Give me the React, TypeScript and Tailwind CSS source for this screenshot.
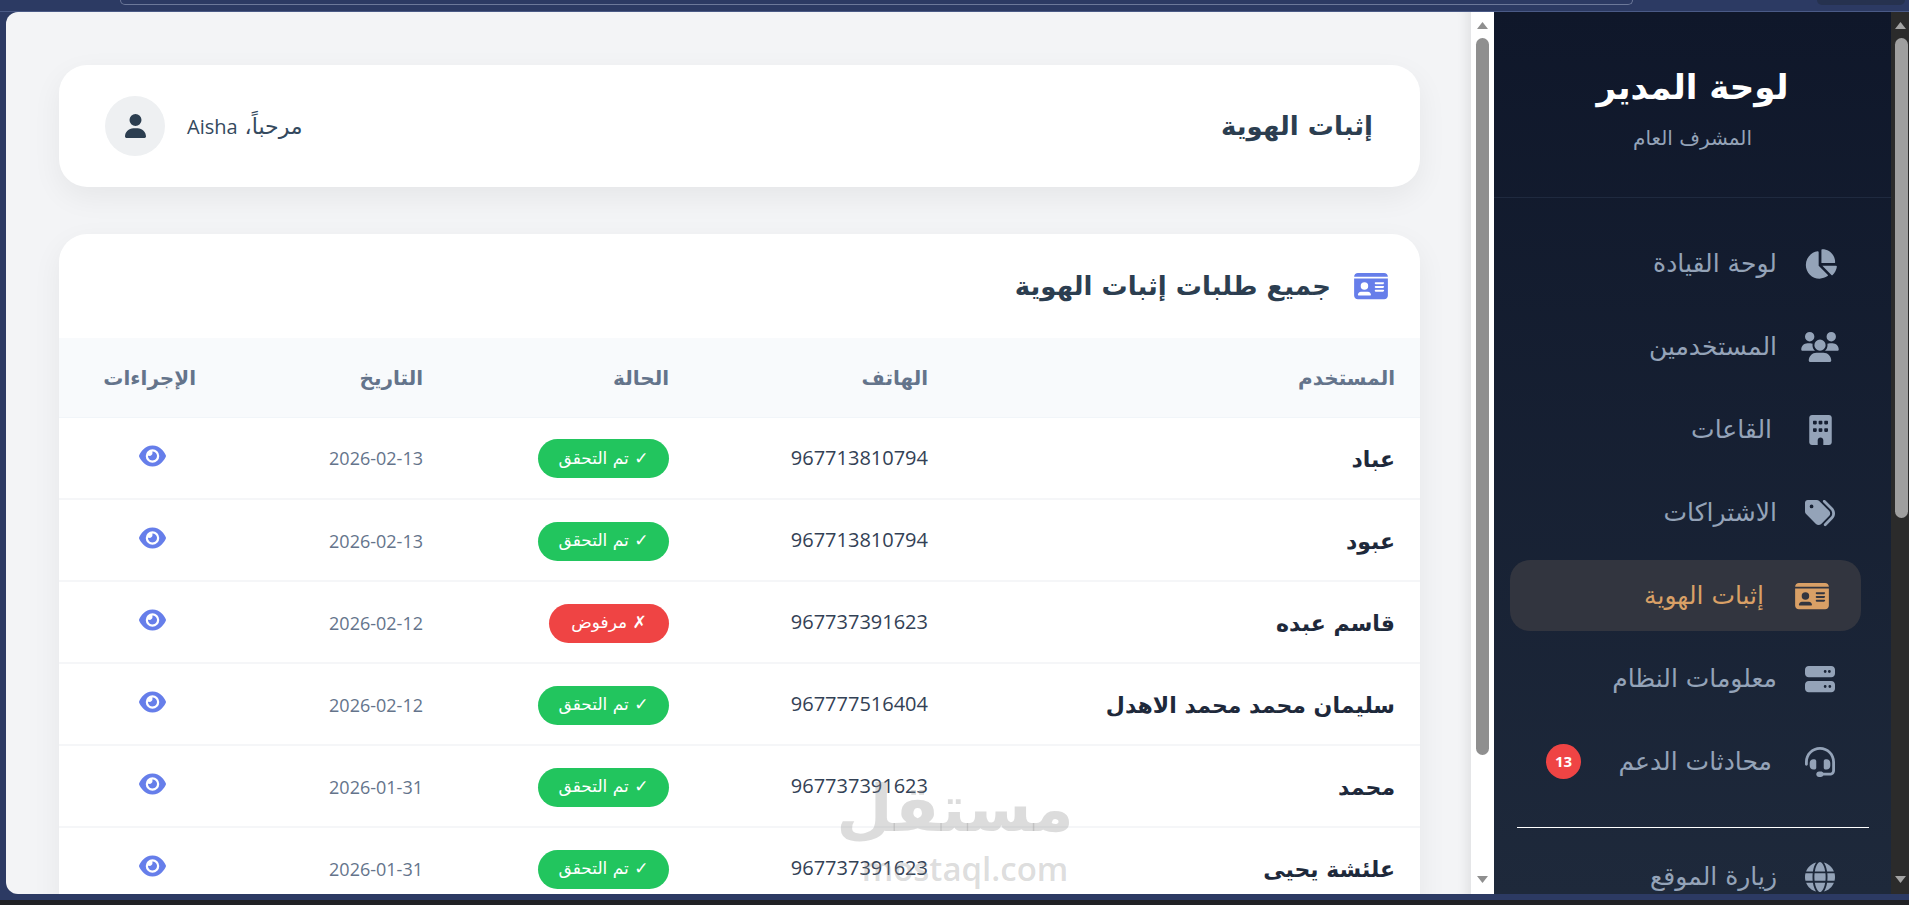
import React from 'react';
import { FaChartPie, FaUsers, FaBuilding, FaTags, FaIdCard, FaServer, FaHeadset, FaGlobe, FaUser, FaEye } from 'react-icons/fa6';

const rows = [
  { name: 'عباد', phone: '967713810794', status: 'ok', date: '2026-02-13' },
  { name: 'عبود', phone: '967713810794', status: 'ok', date: '2026-02-13' },
  { name: 'قاسم عبده', phone: '967737391623', status: 'no', date: '2026-02-12' },
  { name: 'سليمان محمد محمد الاهدل', phone: '967777516404', status: 'ok', date: '2026-02-12' },
  { name: 'محمد', phone: '967737391623', status: 'ok', date: '2026-01-31' },
  { name: 'علئشة يحيى', phone: '967737391623', status: 'ok', date: '2026-01-31' },
];

const navItems = [
  { label: 'لوحة القيادة', icon: FaChartPie, size: 'w-[33px] h-[30px]', gap: 'gap-[23px]' },
  { label: 'المستخدمين', icon: FaUsers, size: 'w-[38px] h-[30px]', gap: 'gap-[23px]' },
  { label: 'القاعات', icon: FaBuilding, size: 'w-[23px] h-[30px]', gap: 'gap-[28px]' },
  { label: 'الاشتراكات', icon: FaTags, size: 'w-[32px] h-[30px]', gap: 'gap-[23px]' },
  { label: 'إثبات الهوية', icon: FaIdCard, size: 'w-[34px] h-[30px]', gap: 'gap-[28px]', active: true },
  { label: 'معلومات النظام', icon: FaServer, size: 'w-[30px] h-[30px]', gap: 'gap-[23px]' },
  { label: 'محادثات الدعم', icon: FaHeadset, size: 'w-[30px] h-[30px]', gap: 'gap-[28px]', badge: 13 },
];

const arabic = "font-['DejaVu_Sans',sans-serif]";

const Scrollbar = ({ track, thumb, arrow, thumbHeight, width }: { track: string; thumb: string; arrow: string; thumbHeight: string; width: string }) => (
  <div className={`${track} ${width} shrink-0 flex flex-col items-center relative`}>
    <svg width="11" height="7" viewBox="0 0 11 7" className={`${arrow} mt-[10px] mb-[9px] fill-current`}>
      <polygon points="5.5,0 11,7 0,7" />
    </svg>
    <div className={`${thumb} ${thumbHeight} w-[13px] rounded-full`} />
    <svg width="11" height="7" viewBox="0 0 11 7" className={`${arrow} mt-auto mb-[11px] fill-current`}>
      <polygon points="0,0 11,0 5.5,7" />
    </svg>
  </div>
);

const Sidebar = () => (
  <aside className="w-[397px] shrink-0 h-full overflow-hidden bg-gradient-to-b from-[#0f172a] to-[#1e293b]">
    <div className="h-[186px] border-b border-[#1f2a3f] flex flex-col items-center pt-[52px]">
      <h1 className={`${arabic} text-[34px] leading-[46px] font-bold text-white`}>لوحة المدير</h1>
      <p className={`${arabic} text-[20px] leading-[24px] mt-[16px] text-[#94a3b8]`}>المشرف العام</p>
    </div>
    <nav className="pt-[30px] pr-[30px] pl-[16px]">
      {navItems.map((item) => {
        const Icon = item.icon;
        return (
          <div
            key={item.label}
            className={`h-[71px] mb-[12px] rounded-[20px] flex items-center ${item.gap} ${item.active ? 'bg-[#32353f] text-[#d9a066] pr-[29px]' : 'text-[#94a3b8] pr-[21px]'} pl-[36px] text-[25px] ${arabic}`}
          >
            <span className="w-[40px] flex justify-center shrink-0">
              <Icon className={item.size} />
            </span>
            <span>{item.label}</span>
            {item.badge && (
              <span className="mr-auto w-[35px] h-[35px] rounded-full bg-[#ef4444] text-white text-[15px] font-bold font-['Open_Sans',sans-serif] flex items-center justify-center">
                {item.badge}
              </span>
            )}
          </div>
        );
      })}
      <div className="h-px bg-white mt-[30px] mb-[13px] mr-[-8px] ml-[7px]" />
      <div className={`h-[71px] flex items-center gap-[23px] pr-[21px] text-[#94a3b8] text-[25px] ${arabic}`}>
        <span className="w-[40px] flex justify-center shrink-0">
          <FaGlobe className="w-[30px] h-[30px]" />
        </span>
        <span>زيارة الموقع</span>
      </div>
    </nav>
  </aside>
);

const StatusBadge = ({ status }: { status: string }) =>
  status === 'ok' ? (
    <span className={`inline-flex items-center justify-center h-[39px] w-[131px] rounded-full bg-[#22c55e] text-white text-[17px] ${arabic}`}>✓ تم التحقق</span>
  ) : (
    <span className={`inline-flex items-center justify-center h-[39px] w-[120px] rounded-full bg-[#ef4444] text-white text-[17px] ${arabic}`}>✗ مرفوض</span>
  );

const MainContent = () => (
  <main className="relative flex-1 min-w-0 h-full overflow-hidden bg-[#f3f4f6] rounded-tl-[12px] rounded-bl-[12px] pt-[53px] pr-[51px] pl-[53px] shadow-[inset_-14px_0_12px_-10px_rgba(0,0,0,0.08)]">
    <div className="h-[122px] bg-white rounded-[28px] shadow-[0_10px_30px_rgba(0,0,0,0.06)] flex items-center justify-between pr-[47px] pl-[46px] mb-[47px]">
      <h2 className={`${arabic} text-[26px] font-bold text-[#2c3e50]`}>إثبات الهوية</h2>
      <div className="flex items-center gap-[22px]">
        <span className={`${arabic} text-[22px] text-[#34495e]`}>
          مرحباً، <span className="font-['Open_Sans',sans-serif] text-[20px]">Aisha</span>
        </span>
        <span className="w-[60px] h-[60px] rounded-full bg-[#eef0f2] flex items-center justify-center text-[#2c3e50]">
          <FaUser className="w-[21px] h-[24px]" />
        </span>
      </div>
    </div>

    <section className="bg-white rounded-t-[28px] shadow-[0_10px_30px_rgba(0,0,0,0.06)] overflow-hidden">
      <div className="h-[104px] flex items-center gap-[23px] pr-[32px]">
        <FaIdCard className="w-[34px] h-[30px] text-[#667eea]" />
        <h3 className={`${arabic} text-[26px] font-bold text-[#2c3e50]`}>جميع طلبات إثبات الهوية</h3>
      </div>
      <table className="w-full table-fixed border-collapse text-right">
        <colgroup>
          <col className="w-[467px]" />
          <col className="w-[259px]" />
          <col className="w-[246px]" />
          <col className="w-[227px]" />
          <col className="w-[162px]" />
        </colgroup>
        <thead>
          <tr className="h-[79px] bg-[#f8fafc] border-b border-[#f1f5f9]">
            {['المستخدم', 'الهاتف', 'الحالة', 'التاريخ', 'الإجراءات'].map((h) => (
              <th key={h} className={`${arabic} px-[25px] pt-[2px] text-[20px] font-semibold text-[#64748b]`}>{h}</th>
            ))}
          </tr>
        </thead>
        <tbody>
          {rows.map((r) => (
            <tr key={r.name} className="h-[82px] border-b-2 border-[#f5f6f8]">
              <td className={`${arabic} px-[25px] pt-[3px] text-[22px] font-bold text-[#1e293b]`}>{r.name}</td>
              <td className="px-[25px] text-[20px] text-[#334155] font-['Open_Sans',sans-serif]">{r.phone}</td>
              <td className="px-[25px] pt-[2px]"><StatusBadge status={r.status} /></td>
              <td className="px-[25px] pt-[2px] text-[18px] text-[#64748b] font-['Open_Sans',sans-serif]">{r.date}</td>
              <td className="px-[25px] pb-[4px]">
                <span className="flex justify-start pr-[30px] text-[#667eea]">
                  <FaEye className="w-[27px] h-[24px]" />
                </span>
              </td>
            </tr>
          ))}
        </tbody>
      </table>
    </section>

    {/* mostaql watermark sits over the table */}
    <div className="absolute left-[829px] top-[755px] w-[240px] flex flex-col items-center text-[#8a8a8a]/30 pointer-events-none">
      <span className={`${arabic} text-[65px] leading-[84px] font-bold`}>مستقل</span>
      <span dir="ltr" className="ml-[20px] font-['Open_Sans',sans-serif] text-[33px] leading-[36px] font-semibold">mostaql.com</span>
    </div>
  </main>
);

const App = () => (
  <div dir="rtl" className="w-[1909px] h-[905px] overflow-hidden bg-[#202124]">
    <div className="h-[900px] flex flex-col bg-[#2c3a63]">
      <div dir="ltr" className="h-[12px] shrink-0 flex justify-between border-b border-[#4a5a86] pl-[120px] pr-[4px]">
        <div className="w-[1513px] h-[5px] rounded-b-[14px] border-b border-x border-[#6c7899]" />
        <div className="w-[88px] h-[5px] rounded-b-[8px] bg-[#26324f]" />
      </div>
      <div className="flex h-[882px] shrink-0 pl-[6px]">
        <Scrollbar track="bg-[#2b2b2b]" thumb="bg-[#9f9f9f] mr-[-3px]" arrow="text-[#a3a3a3]" thumbHeight="h-[480px]" width="w-[18px]" />
        <Sidebar />
        <Scrollbar track="bg-white" thumb="bg-[#8f8f8f]" arrow="text-[#8f8f8f]" thumbHeight="h-[717px]" width="w-[23px]" />
        <MainContent />
      </div>
    </div>
  </div>
);

export default App;
